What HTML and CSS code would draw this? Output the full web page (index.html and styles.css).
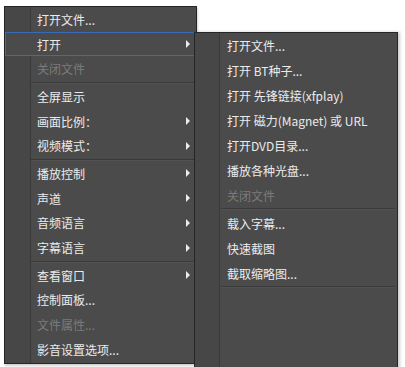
FILE: index.html
```html
<!DOCTYPE html>
<html lang="zh-CN">
<head>
  <meta charset="UTF-8" />
  <title>影音 菜单</title>
  <link rel="stylesheet" href="styles.css">
</head>
<body>
  <div class="stage">
    <!-- Main context menu -->
    <ul class="menu main-menu">
      <li class="item">打开文件...</li>
      <li class="item active has-sub">打开</li>
      <li class="item disabled">关闭文件</li>
      <li class="sep"></li>
      <li class="item">全屏显示</li>
      <li class="item has-sub">画面比例：</li>
      <li class="item has-sub">视频模式：</li>
      <li class="sep"></li>
      <li class="item has-sub">播放控制</li>
      <li class="item has-sub">声道</li>
      <li class="item has-sub">音频语言</li>
      <li class="item has-sub">字幕语言</li>
      <li class="sep"></li>
      <li class="item has-sub">查看窗口</li>
      <li class="item">控制面板...</li>
      <li class="item disabled">文件属性...</li>
      <li class="item">影音设置选项...</li>
    </ul>

    <!-- Submenu for "打开" -->
    <ul class="menu sub-menu">
      <li class="item">打开文件...</li>
      <li class="item">打开 BT种子...</li>
      <li class="item">打开 先锋链接(xfplay)</li>
      <li class="item">打开 磁力(Magnet) 或 URL</li>
      <li class="item">打开DVD目录...</li>
      <li class="item">播放各种光盘...</li>
      <li class="item disabled">关闭文件</li>
      <li class="sep"></li>
      <li class="item">载入字幕...</li>
      <li class="item">快速截图</li>
      <li class="item">截取缩略图...</li>
      <li class="sep"></li>
    </ul>
  </div>
</body>
</html>
```

FILE: styles.css
```css
* {
  margin: 0;
  padding: 0;
  box-sizing: border-box;
}

html, body {
  width: 405px;
  height: 367px;
  overflow: hidden;
  background: #ffffff;
  font-family: "Microsoft YaHei", "Noto Sans CJK SC", sans-serif;
  font-size: 12px;
  color: #ebebeb;
}

.stage {
  position: relative;
  width: 405px;
  height: 367px;
  padding: 6px 0 0 4px;
}

.menu {
  list-style: none;
  border: 1px solid #262626;
  background: linear-gradient(to right, #474747 0 25px, #393939 25px 26px, #4b4b4b 26px);
}

.main-menu {
  width: 193px;
  height: 358px;
  box-shadow: 1px 2px 2px rgba(0, 0, 0, 0.18);
}

/* popup, sits over the main menu */
.sub-menu {
  position: absolute;
  top: 32px;
  left: 194px;
  width: 204px;
  height: 345px;
  background: linear-gradient(to right, #474747 0 24px, #393939 24px 25px, #4b4b4b 25px);
  box-shadow: 2px 0 3px rgba(0, 0, 0, 0.2);
}

.item {
  display: flex;
  align-items: center;
  height: 24.7px;
  padding-left: 32px;
  padding-right: 6px;
  white-space: nowrap;
}

.sub-menu .item {
  height: 25px;
  padding-left: 32px;
}

.item.disabled {
  color: #7b7b7b;
}

.item.active {
  margin-right: -2px;
  border: 1px solid #3a6bb8;
  background: #4b4b4b;
  padding-left: 31px;
}

.has-sub::after {
  content: "";
  margin-left: auto;
  border-left: 4px solid #ececec;
  border-top: 4px solid transparent;
  border-bottom: 4px solid transparent;
}

.item.active::after {
  margin-right: 1px;
}

.sep {
  height: 3px;
  margin-left: 26px;
  margin-right: 1px;
  padding-top: 1px;
}

.sep::before {
  content: "";
  display: block;
  height: 1px;
  background: #393939;
  border-bottom: 1px solid #525252;
  box-sizing: content-box;
}

.sub-menu .sep {
  padding-top: 0;
  margin-right: 2px;
}
```
